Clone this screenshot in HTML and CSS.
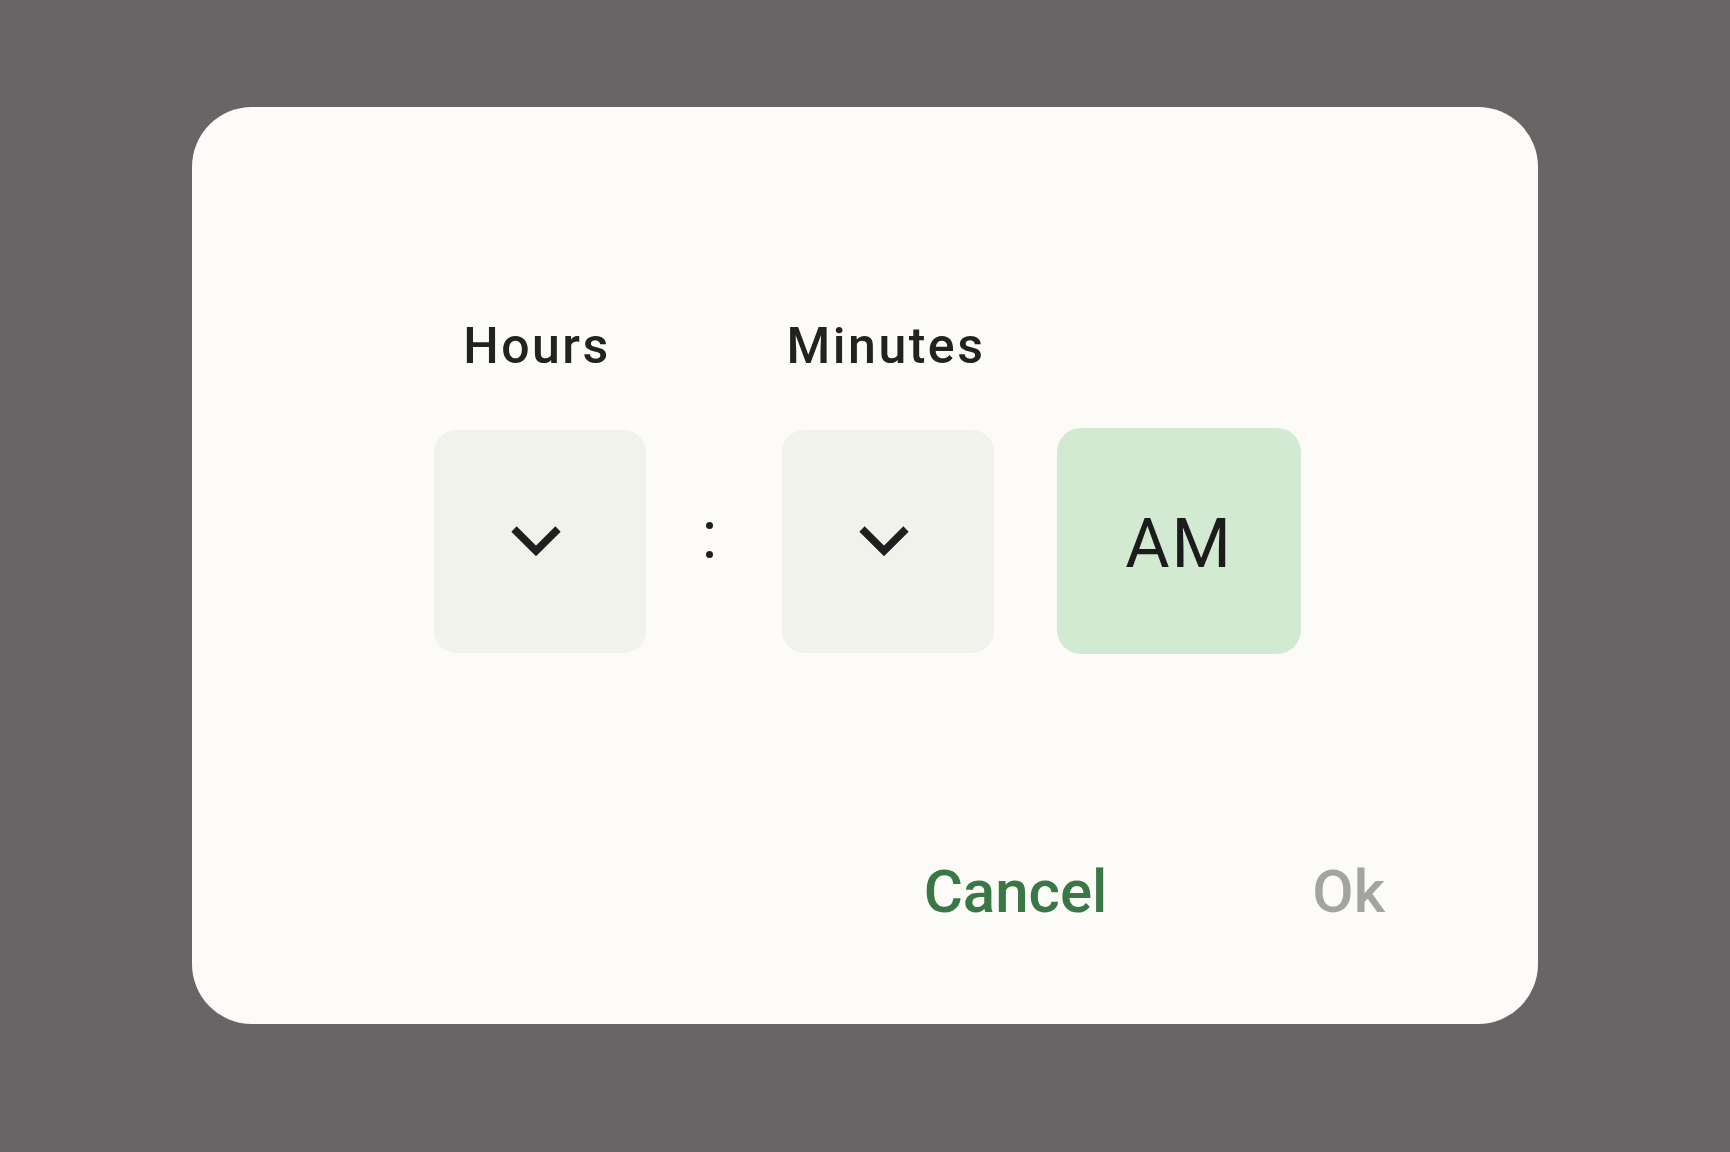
FILE: index.html
```html
<!DOCTYPE html>
<html lang="en">
<head>
<meta charset="utf-8">
<title>Time picker</title>
<link rel="stylesheet" href="styles.css">
</head>
<body>
<div class="scrim">
  <div class="dialog">
    <div class="labels">
      <div class="label">Hours</div>
      <div class="label-spacer"></div>
      <div class="label">Minutes</div>
    </div>
    <div class="pickers">
      <div class="field">
        <svg class="chev" viewBox="0 0 60 40" width="60" height="40"><polyline points="8,8 30,30 52,8" fill="none" stroke="#1f1f1f" stroke-width="7.5" stroke-linecap="butt" stroke-linejoin="miter"/></svg>
      </div>
      <div class="colon"><span class="dot"></span><span class="dot"></span></div>
      <div class="field">
        <svg class="chev" viewBox="0 0 60 40" width="60" height="40"><polyline points="8,8 30,30 52,8" fill="none" stroke="#1f1f1f" stroke-width="7.5" stroke-linecap="butt" stroke-linejoin="miter"/></svg>
      </div>
      <div class="ampm">AM</div>
    </div>
    <div class="actions">
      <button class="btn btn-cancel">Cancel</button>
      <button class="btn btn-ok">Ok</button>
    </div>
  </div>
</div>
</body>
</html>
```
FILE: styles.css
```css
html, body {
  margin: 0;
  padding: 0;
  background: #676565;
}
body {
  font-family: Roboto, "Liberation Sans", sans-serif;
}
.scrim {
  width: 1730px;
  height: 1152px;
  padding: 107px 0 0 192px;
  box-sizing: border-box;
}
.dialog {
  width: 1346px;
  height: 917px;
  background: #fdfbf8;
  border-radius: 60px;
  box-sizing: border-box;
  padding: 214px 0 0 242px;
  display: flex;
  flex-direction: column;
}
.labels {
  display: flex;
  height: 50px;
}
.label {
  width: 212px;
  text-align: center;
  font-size: 50px;
  line-height: 50px;
  font-weight: 500;
  letter-spacing: 2.5px;
  color: #222221;
  margin-left: -3px;
  margin-right: 3px;
}
.label-spacer {
  width: 137px;
}
.pickers {
  display: flex;
  align-items: center;
  margin-top: 58px;
  height: 224px;
}
.field {
  width: 212px;
  height: 223px;
  background: #f2f2ed;
  border-radius: 22px;
  display: flex;
  align-items: center;
  justify-content: center;
}
.chev {
  display: block;
  margin-left: -8px;
}
.colon {
  width: 7px;
  margin: 0 69px 0 60px;
  display: flex;
  flex-direction: column;
  gap: 22px;
  padding-bottom: 2px;
}
.dot {
  width: 7px;
  height: 7px;
  border-radius: 50%;
  background: #1f1f1f;
}
.ampm {
  margin-left: 63px;
  width: 244px;
  height: 226px;
  box-sizing: border-box;
  padding-top: 6px;
  background: #d3ead2;
  border-radius: 24px;
  display: flex;
  align-items: center;
  justify-content: center;
  font-size: 68px;
  font-weight: 400;
  color: #1c1c1c;
  letter-spacing: 2px;
}
.actions {
  display: flex;
  justify-content: flex-end;
  margin-top: 209px;
  padding-right: 153px;
  gap: 205px;
}
.btn {
  border: 0;
  background: none;
  padding: 0;
  font-family: Roboto, "Liberation Sans", sans-serif;
  font-size: 60px;
  line-height: 60px;
  font-weight: 500;
  cursor: pointer;
}
.btn-cancel {
  color: #3a7746;
}
.btn-ok {
  color: #a3a3a2;
}
```
